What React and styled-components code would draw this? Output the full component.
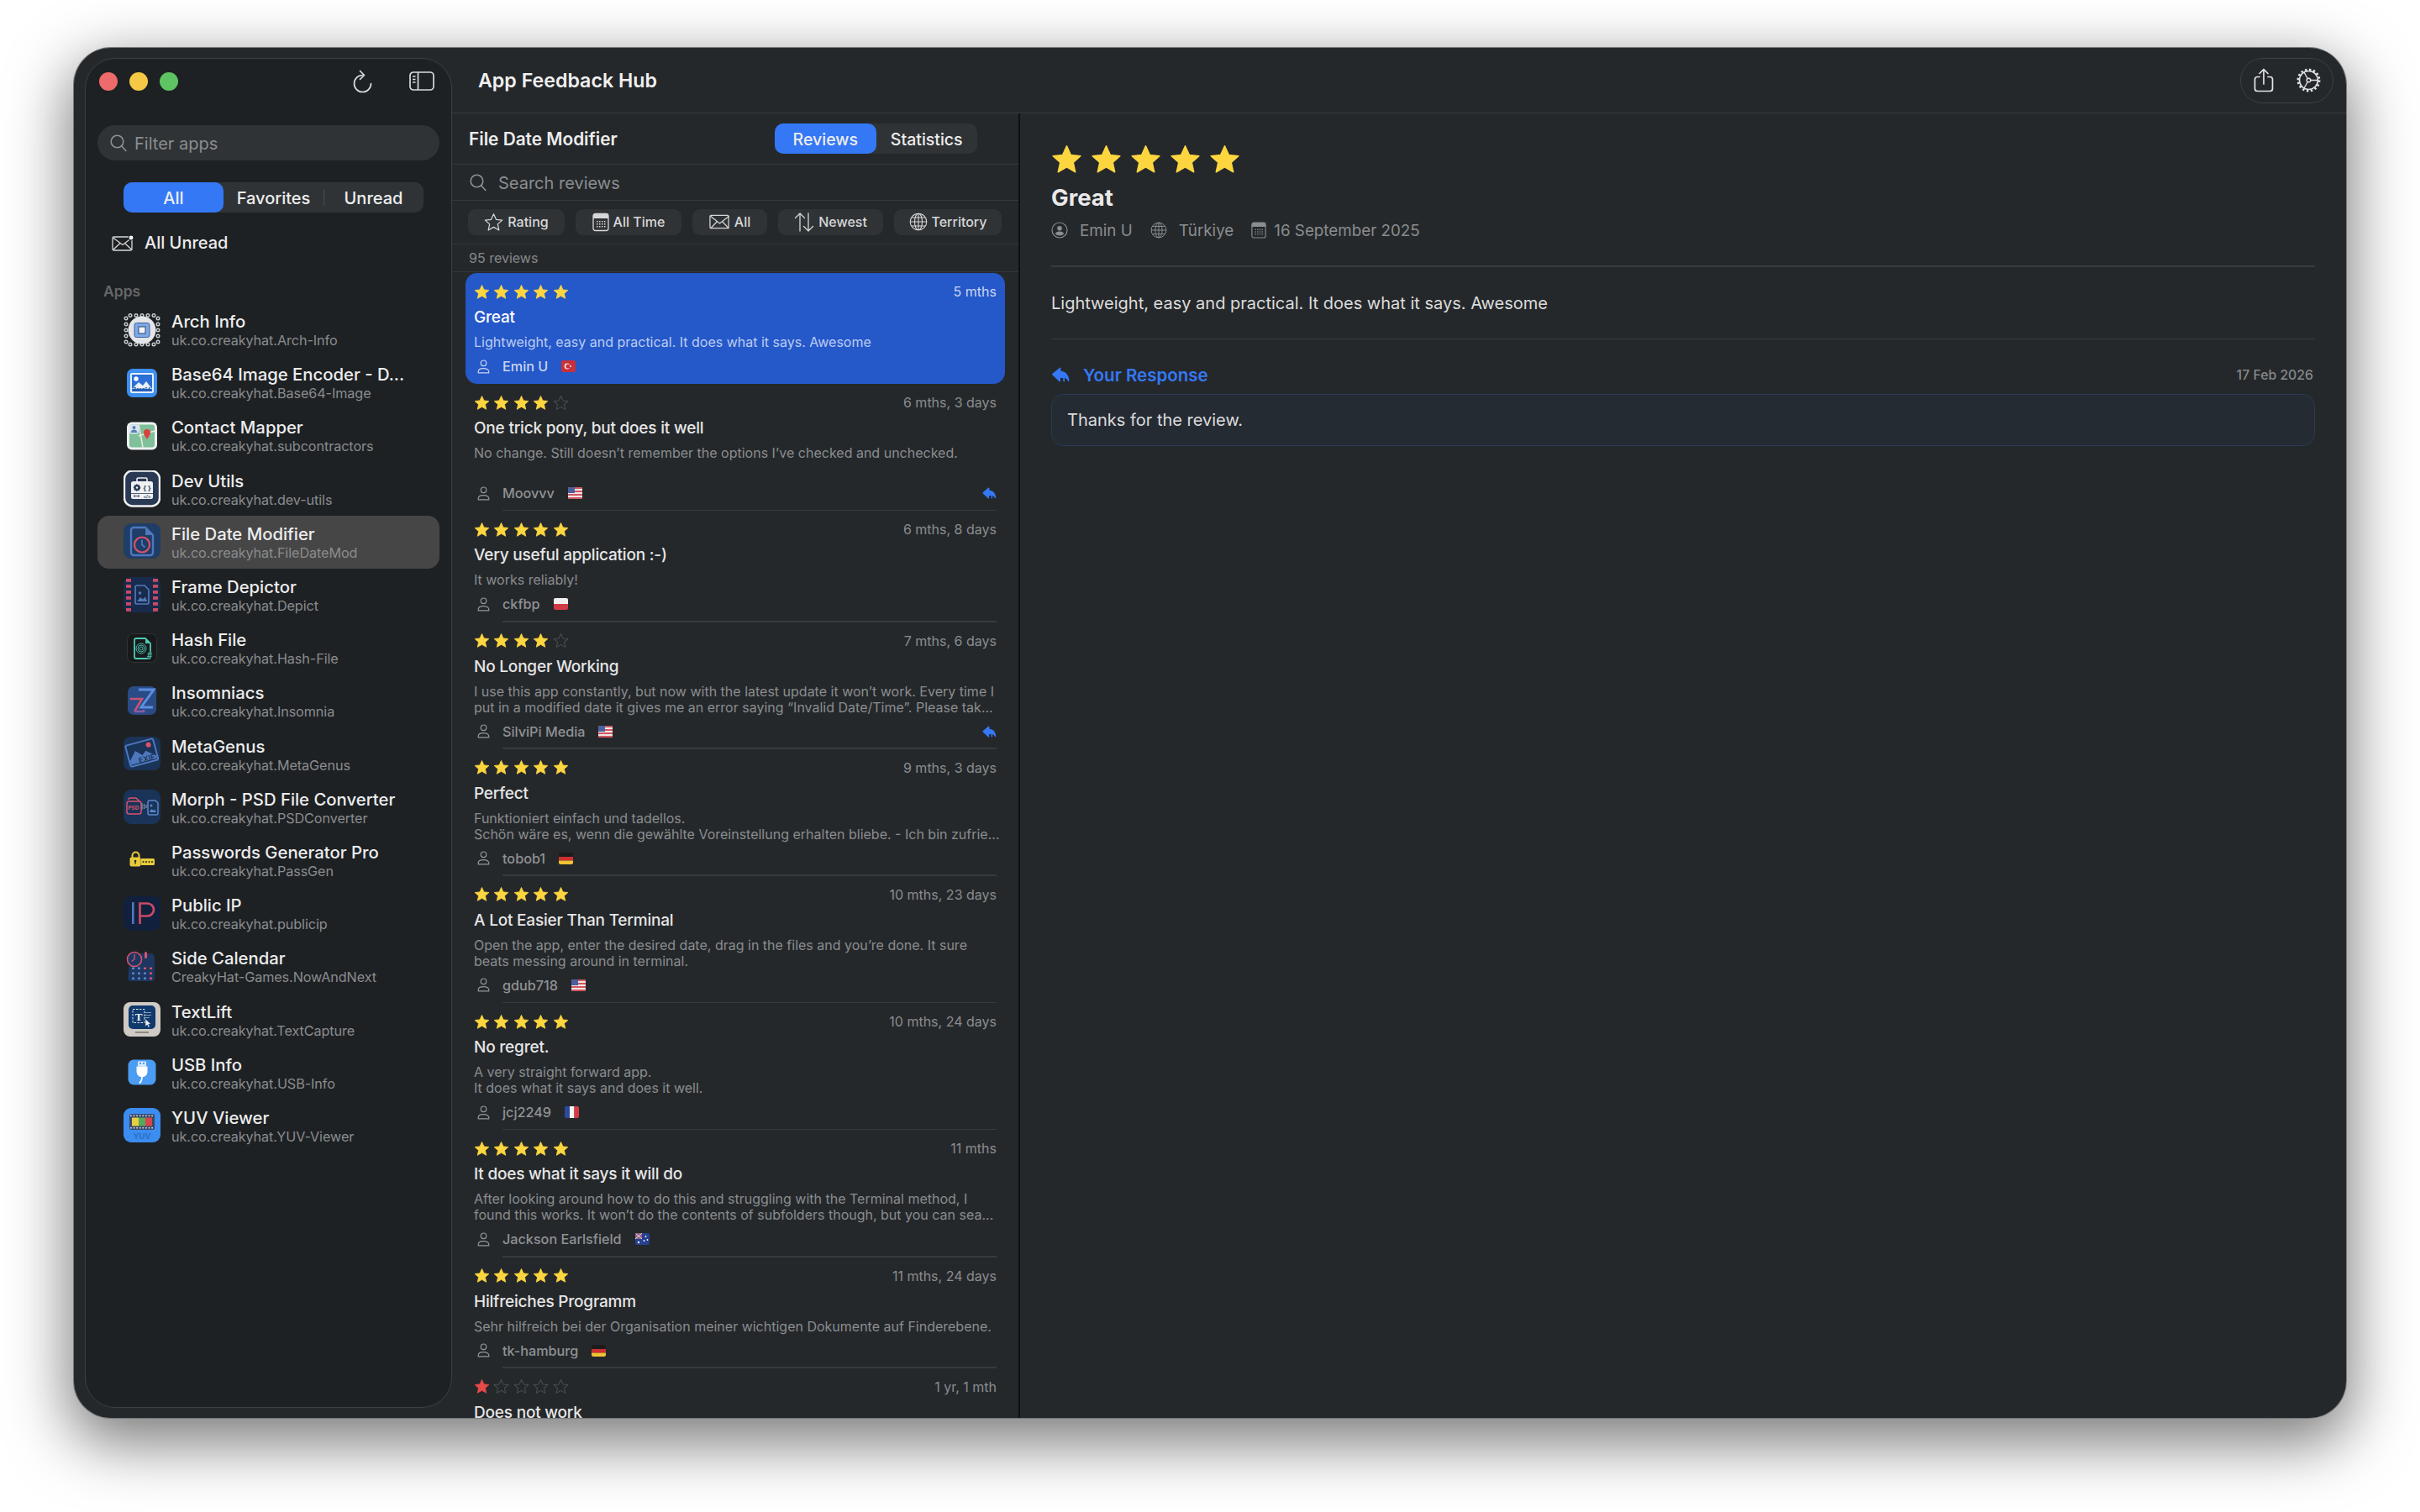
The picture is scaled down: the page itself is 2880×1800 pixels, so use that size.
import React from "react";
import styled, { createGlobalStyle } from "styled-components";

const BLUE = "#3478f6";
const FONT = `Inter, "Liberation Sans", sans-serif`;

const GlobalStyle = createGlobalStyle`
  html, body { margin: 0; padding: 0; background: #fff; }
  body { font-family: ${FONT}; -webkit-font-smoothing: antialiased; }
  * { box-sizing: border-box; }
  svg { display: block; flex: none; }
`;

const apps = [
  ["arch", "Arch Info", "uk.co.creakyhat.Arch-Info"],
  ["base64", "Base64 Image Encoder - D...", "uk.co.creakyhat.Base64-Image"],
  ["contact", "Contact Mapper", "uk.co.creakyhat.subcontractors"],
  ["dev", "Dev Utils", "uk.co.creakyhat.dev-utils"],
  ["filedate", "File Date Modifier", "uk.co.creakyhat.FileDateMod"],
  ["frame", "Frame Depictor", "uk.co.creakyhat.Depict"],
  ["hash", "Hash File", "uk.co.creakyhat.Hash-File"],
  ["insomnia", "Insomniacs", "uk.co.creakyhat.Insomnia"],
  ["meta", "MetaGenus", "uk.co.creakyhat.MetaGenus"],
  ["morph", "Morph - PSD File Converter", "uk.co.creakyhat.PSDConverter"],
  ["pass", "Passwords Generator Pro", "uk.co.creakyhat.PassGen"],
  ["ip", "Public IP", "uk.co.creakyhat.publicip"],
  ["calendar", "Side Calendar", "CreakyHat-Games.NowAndNext"],
  ["textlift", "TextLift", "uk.co.creakyhat.TextCapture"],
  ["usb", "USB Info", "uk.co.creakyhat.USB-Info"],
  ["yuv", "YUV Viewer", "uk.co.creakyhat.YUV-Viewer"],
];

const reviews = [
  { stars: 5, age: "5 mths", title: "Great", body: "Lightweight, easy and practical. It does what it says. Awesome", name: "Emin U", flag: "tr", selected: true },
  { stars: 4, age: "6 mths, 3 days", title: "One trick pony, but does it well", body: "No change. Still doesn’t remember the options I’ve checked and unchecked.", name: "Moovvv", flag: "us", replied: true },
  { stars: 5, age: "6 mths, 8 days", title: "Very useful application :-)", body: "It works reliably!", name: "ckfbp", flag: "pl" },
  { stars: 4, age: "7 mths, 6 days", title: "No Longer Working", body: "I use this app constantly, but now with the latest update it won’t work. Every time I\nput in a modified date it gives me an error saying “Invalid Date/Time”. Please tak...", name: "SilviPi Media", flag: "us", replied: true },
  { stars: 5, age: "9 mths, 3 days", title: "Perfect", body: "Funktioniert einfach und tadellos.\nSchön wäre es, wenn die gewählte Voreinstellung erhalten bliebe. - Ich bin zufrie...", name: "tobob1", flag: "de" },
  { stars: 5, age: "10 mths, 23 days", title: "A Lot Easier Than Terminal", body: "Open the app, enter the desired date, drag in the files and you’re done. It sure\nbeats messing around in terminal.", name: "gdub718", flag: "us" },
  { stars: 5, age: "10 mths, 24 days", title: "No regret.", body: "A very straight forward app.\nIt does what it says and does it well.", name: "jcj2249", flag: "fr" },
  { stars: 5, age: "11 mths", title: "It does what it says it will do", body: "After looking around how to do this and struggling with the Terminal method, I\nfound this works. It won’t do the contents of subfolders though, but you can sea...", name: "Jackson Earlsfield", flag: "au" },
  { stars: 5, age: "11 mths, 24 days", title: "Hilfreiches Programm", body: "Sehr hilfreich bei der Organisation meiner wichtigen Dokumente auf Finderebene.", name: "tk-hamburg", flag: "de" },
  { stars: 1, age: "1 yr, 1 mth", title: "Does not work", body: "", name: "", flag: "" },
];

/* ---------- small glyphs ---------- */

const StarIcon = ({ size, filled, color, outline = "#4b4e51" }) => (
  <svg width={size} height={size} viewBox="0 0 24 24">
    <path
      d="M12 1.8l3.1 6.9 7.5.8-5.6 5 1.6 7.4L12 18.1l-6.6 3.8L7 14.5l-5.6-5 7.5-.8z"
      fill={filled ? color : "none"}
      stroke={filled ? color : outline}
      strokeWidth={filled ? 1 : 1.3}
      strokeLinejoin="round"
    />
  </svg>
);

const ReplyIcon = ({ width, height }) => (
  <svg width={width} height={height} viewBox="0 0 24 20">
    <path
      d="M10.5.8c.6-.4 1.4 0 1.4.8v3.7c6.6.4 10.6 5 11.1 12.6.1 1-.9 1.4-1.5.6-1.5-2.3-2.9-3.7-4.5-4.3v4.2c0 .8-.8 1.2-1.4.8-.3-.2-.5-.4-.5-.7v-3.900c-1.200-.2-2.400-.2-3.700-.1v3.900c0 .8-.8 1.200-1.400.8L.7 10.400c-.5-.4-.5-1.100 0-1.500z"
      fill={BLUE}
    />
  </svg>
);

const SearchIcon = () => (
  <svg width="20" height="21" viewBox="0 0 20 21" fill="none" stroke="#8e9193" strokeWidth="1.6" strokeLinecap="round">
    <circle cx="8.5" cy="8.5" r="7.3" />
    <path d="M13.8 14l5 5.5" />
  </svg>
);

const RefreshIcon = () => (
  <svg width="24" height="28" viewBox="0 0 24 28" fill="none" stroke="#d9dadb" strokeWidth="1.7" strokeLinecap="round" strokeLinejoin="round">
    <path d="M12.5 6.500A10 10 0 1 0 22.500 16.500" />
    <path d="M9.500 1.500l5 5-5 5" />
  </svg>
);

const SidebarIcon = () => (
  <svg width="30" height="23" viewBox="0 0 30 23" fill="none" stroke="#d9dadb" strokeWidth="1.7">
    <rect x="1" y="1" width="28" height="21" rx="4" />
    <path d="M10.5 1v21" />
    <path d="M4 6h3.5M4 9.5h3.5M4 13h3.5" strokeWidth="1.5" />
  </svg>
);

const ShareIcon = () => (
  <svg width="24" height="29" viewBox="0 0 24 29" fill="none" stroke="#e3e4e5" strokeWidth="1.7" strokeLinecap="round" strokeLinejoin="round">
    <path d="M7 10.5H4.500a3 3 0 0 0-3 3v11a3 3 0 0 0 3 3h15a3 3 0 0 0 3-3v-11a3 3 0 0 0-3-3H17" />
    <path d="M12 19V1.500M7 6.500l5-5 5 5" />
  </svg>
);

const GearIcon = () => (
  <svg width="29" height="29" viewBox="0 0 29 29" fill="none" stroke="#e3e4e5">
    <circle cx="14.5" cy="14.5" r="11" strokeWidth="1.6" />
    <circle cx="14.5" cy="14.5" r="12.7" strokeWidth="2.5" strokeDasharray="2.4 2.6" />
    <circle cx="14.5" cy="14.5" r="2.3" strokeWidth="1.4" />
    <path d="M16.8 14.500h8.500M13.300 12.500L9 5M13.300 16.500L9 24" strokeWidth="1.4" />
  </svg>
);

const EnvelopeIcon = ({ dot, width = 26, height = 19, color = "#d6d7d8" }) => (
  <svg width={width} height={height} viewBox="0 0 26 19" fill="none" stroke={color} strokeWidth="1.3">
    <rect x="1" y={dot ? 2 : 1} width="23" height="16" rx="1.5" />
    <path d={dot ? "M1.5 3l11.500 8.500L24 3M1.500 17.500l8.500-8M24 17.500l-8.500-8" : "M1.500 2l11.500 9 11.500-9M1.500 17.500l8.500-9M24.500 17.500l-8.500-9"} />
    {dot && <circle cx="23" cy="3" r="3" fill="#f2f2f2" stroke="#1e2124" strokeWidth="1" />}
  </svg>
);

const GlobeIcon = ({ size, color }) => (
  <svg width={size} height={size} viewBox="0 0 22 22" fill="none" stroke={color} strokeWidth="1.1">
    <circle cx="11" cy="11" r="9.8" />
    <ellipse cx="11" cy="11" rx="4.5" ry="9.8" />
    <path d="M11 1.200v19.600M1.200 11h19.600M2.700 6h16.600M2.700 16h16.600" />
  </svg>
);

const CalendarIcon = ({ width, height, color }) => (
  <svg width={width} height={height} viewBox="0 0 20 22" fill="none">
    <rect x="1" y="1" width="18" height="20" rx="2.5" stroke={color} strokeWidth="1.3" />
    <path d="M1 4a3 3 0 0 1 3-3h12a3 3 0 0 1 3 3v2.500H1z" fill={color} />
    {[9.5, 12.5, 15.5].map((y) =>
      [5, 8, 11, 14].map((x) => <rect key={`${x}-${y}`} x={x} y={y} width="1.5" height="1.5" fill={color} />)
    )}
  </svg>
);

const PersonIcon = ({ color }) => (
  <svg width="15" height="17" viewBox="0 0 15 17" fill="none" stroke={color} strokeWidth="1.2">
    <circle cx="7.5" cy="4.3" r="3.3" />
    <path d="M1.200 15.800v-1.300c0-2.200 2.400-3.800 6.300-3.800s6.300 1.600 6.300 3.800v1.300z" strokeLinejoin="round" />
  </svg>
);

const PersonCircleIcon = ({ color }) => (
  <svg width="20" height="20" viewBox="0 0 20 20" fill="none" stroke={color} strokeWidth="1.2">
    <circle cx="10" cy="10" r="9" />
    <circle cx="10" cy="7.8" r="2.8" fill={color} stroke="none" />
    <path d="M4.800 14.500c.5-2 2.500-3 5.200-3s4.700 1 5.200 3c-1.300 1.300-3.100 2-5.200 2s-3.900-.7-5.200-2z" fill={color} stroke="none" />
  </svg>
);

const SortIcon = () => (
  <svg width="24" height="25" viewBox="0 0 24 25" fill="none" stroke="#d6d7d8" strokeWidth="1.3" strokeLinecap="round" strokeLinejoin="round">
    <path d="M7 23V2M1.500 7.500L7 2l5.500 5.500" />
    <path d="M17 2v21M11.500 17.500L17 23l5.500-5.500" />
  </svg>
);

const Flag = ({ code }) =>
  code ? (
    <FlagBox width="17" height="14" viewBox="0 0 17 14">
      {code === "tr" && (
        <>
          <rect width="17" height="14" fill="#c8303a" />
          <circle cx="7" cy="7" r="3.4" fill="#f4e5e5" />
          <circle cx="8" cy="7" r="2.6" fill="#c8303a" />
          <circle cx="11" cy="7" r="1" fill="#f4e5e5" />
        </>
      )}
      {code === "us" && (
        <>
          <rect width="17" height="14" fill="#eee5e5" />
          {[0, 4, 8, 12].map((y) => (
            <rect key={y} y={y} width="17" height="2" fill="#d2555f" />
          ))}
          <rect width="8" height="7" fill="#4c5f9e" />
        </>
      )}
      {code === "pl" && (
        <>
          <rect width="17" height="7" fill="#f2eeee" />
          <rect y="7" width="17" height="7" fill="#d23a46" />
        </>
      )}
      {code === "de" && (
        <>
          <rect width="17" height="5" fill="#1c1c1c" />
          <rect y="5" width="17" height="4.5" fill="#cf2f2f" />
          <rect y="9.5" width="17" height="4.5" fill="#f1c232" />
        </>
      )}
      {code === "fr" && (
        <>
          <rect width="6" height="14" fill="#2a4a9c" />
          <rect x="6" width="5.5" height="14" fill="#f4f4f4" />
          <rect x="11.5" width="5.5" height="14" fill="#d83a44" />
        </>
      )}
      {code === "au" && (
        <>
          <rect width="17" height="14" fill="#27408f" />
          <rect width="8" height="7" fill="#8f5f83" />
          <path d="M0 0l8 7M8 0L0 7" stroke="#e7dede" strokeWidth="1" />
          <circle cx="12.5" cy="4" r=".9" fill="#fff" />
          <circle cx="14.5" cy="8" r=".9" fill="#fff" />
          <circle cx="10.5" cy="9" r=".9" fill="#fff" />
          <circle cx="4" cy="11" r="1.2" fill="#fff" />
        </>
      )}
    </FlagBox>
  ) : null;

/* ---------- app icons, all drawn on a 44x44 canvas ---------- */

const drawings = {
  arch: (
    <>
      <g fill="none" stroke="#c9ccd1" strokeWidth="1.4">
        {[8, 15, 22, 29, 36].map((x) => (
          <React.Fragment key={x}>
            <circle cx={x} cy="4.5" r="1.8" />
            <circle cx={x} cy="39" r="1.8" />
            <circle cx="3" cy={x} r="1.8" />
            <circle cx="41" cy={x} r="1.8" />
          </React.Fragment>
        ))}
      </g>
      <circle cx="22" cy="22" r="16.5" fill="#e4e5e8" />
      <rect x="13" y="13.5" width="18" height="17" rx="2.5" fill="#7fa9e6" stroke="#3a5f9c" strokeWidth="1" />
      <rect x="18" y="18" width="8" height="8" fill="#f1f4f9" stroke="#26446f" strokeWidth="1" />
    </>
  ),
  base64: (
    <>
      <rect x="4" y="5" width="36" height="34" rx="7" fill="#3d8ff0" />
      <rect x="8" y="10" width="28" height="24" rx="2" fill="#e7eefb" />
      <rect x="10" y="12" width="24" height="20" fill="#2c6fd6" />
      <circle cx="15" cy="17" r="2.7" fill="#fff" />
      <path d="M10 29l8-8 5 4 4-5 7 9z" fill="#eaf1fb" />
      <text x="22" y="31.8" fontSize="5.6" fontWeight="700" textAnchor="middle" fill="#1f4f9f" fontFamily="Inter">Base64</text>
    </>
  ),
  contact: (
    <>
      <rect x="4" y="5.5" width="36" height="33" rx="6" fill="#eef0f0" />
      <rect x="7" y="8.5" width="30" height="27" rx="3" fill="#7fbf9a" />
      <path d="M18 8.500l5 27M18 22l19-6" stroke="#e9eee0" strokeWidth="1.5" fill="none" />
      <rect x="7" y="8.5" width="11" height="11" rx="2" fill="#d8e4f1" />
      <circle cx="12.5" cy="12" r="2" fill="#5b82b5" />
      <path d="M8.500 18c.5-2.500 2-3.500 4-3.500s3.500 1 4 3.500z" fill="#5b82b5" />
      <path d="M28 26c-2.500-4-4-5.500-4-8a4 4 0 0 1 8 0c0 2.500-1.500 4-4 8z" fill="#d8433f" />
    </>
  ),
  dev: (
    <>
      <rect x="1" y="0.5" width="42" height="42" rx="9.5" fill="#2a3a55" stroke="#f2f2f2" strokeWidth="2.4" />
      <path d="M16 13v-2.500c0-.8.7-1.500 1.500-1.500h9c.8 0 1.500.7 1.500 1.500V13" fill="none" stroke="#eee" strokeWidth="1.6" />
      <rect x="9" y="13" width="26" height="21" rx="2.5" fill="#f0f1f3" />
      <path d="M9 27.500h26" stroke="#2a3a55" strokeWidth=".8" />
      <circle cx="16" cy="20.5" r="3.5" fill="#2a3a55" stroke="#2a3a55" strokeWidth="1.4" strokeDasharray="1.5 1" />
      <circle cx="16" cy="20.5" r="1.2" fill="#f0f1f3" />
      <text x="28" y="23.5" fontSize="8" fontWeight="700" textAnchor="middle" fill="#2a3a55" fontFamily="Inter">{"{ }"}</text>
      <text x="28" y="33" fontSize="5" fontWeight="700" textAnchor="middle" fill="#2a3a55" fontFamily="Inter">{"</>"}</text>
      <path d="M12 30.500h7M12 30.500l1.500-1.300M12 30.500l1.500 1.300M19 30.500l-1.500-1.300M19 30.500l-1.500 1.300" stroke="#2a3a55" strokeWidth=".9" fill="none" />
    </>
  ),
  filedate: (
    <>
      <rect x="0" y="0" width="44" height="42" rx="9" fill="#1f3d66" />
      <path d="M9 8a3 3 0 0 1 3-3h14l9 9v21a3 3 0 0 1-3 3H12a3 3 0 0 1-3-3z" fill="none" stroke="#4e78bd" strokeWidth="2.4" />
      <path d="M26 5v9h9z" fill="#4e78bd" />
      <circle cx="22" cy="25.5" r="9" fill="#1f3d66" stroke="#d9526b" strokeWidth="2.2" />
      <path d="M22 19.500v6l3.500 3" fill="none" stroke="#4e78bd" strokeWidth="1.8" />
    </>
  ),
  frame: (
    <>
      <rect x="0" y="0" width="44" height="42" rx="8" fill="#182b4c" />
      {[2, 9, 16, 23, 30, 37].map((y) => (
        <React.Fragment key={y}>
          <rect x="3" y={y} width="6" height="3.8" fill="#c94a62" />
          <rect x="35" y={y} width="6" height="3.8" fill="#c94a62" />
        </React.Fragment>
      ))}
      <path d="M14 12a2 2 0 0 1 2-2h9l5 5v15a2 2 0 0 1-2 2H16a2 2 0 0 1-2-2z" fill="none" stroke="#5079b8" strokeWidth="1.7" />
      <circle cx="19.5" cy="19" r="1.8" fill="#5079b8" />
      <path d="M16 29l4-5 3 2.500 2.500-3 3 5.500z" fill="#5079b8" />
    </>
  ),
  hash: (
    <>
      <rect x="4.5" y="4.5" width="35" height="34" rx="7" fill="#17191b" stroke="#303436" strokeWidth="1" />
      <path d="M13 12a2 2 0 0 1 2-2h11l6 6v16a2 2 0 0 1-2 2H15a2 2 0 0 1-2-2z" fill="none" stroke="#4fc9b4" strokeWidth="1.8" />
      <path d="M26 10v6h6z" fill="#4fc9b4" />
      <g fill="none" stroke="#4fc9b4" strokeWidth=".9">
        <circle cx="21" cy="22" r="2" />
        <circle cx="21" cy="22" r="4" />
        <circle cx="21" cy="22" r="6" />
      </g>
      <text x="31" y="34" fontSize="10" fontWeight="800" textAnchor="middle" fill="#4fc9b4" stroke="#17191b" strokeWidth=".3" fontFamily="Inter">#</text>
    </>
  ),
  insomnia: (
    <>
      <rect x="5" y="4" width="34" height="34" rx="7" fill="#2a4b86" />
      <path d="M8 19h14l-9 15" fill="none" stroke="#c85273" strokeWidth="2.6" />
      <path d="M13 34h11v-2" fill="none" stroke="#8a5aa0" strokeWidth="2.6" />
      <path d="M18 8h18L21 29h14" fill="none" stroke="#5b8ee0" strokeWidth="3" />
    </>
  ),
  meta: (
    <>
      <rect x="0" y="1" width="44" height="40" rx="8" fill="#1a3358" />
      <g transform="rotate(-15 22 21)">
        <rect x="5" y="7" width="34" height="26" rx="2" fill="none" stroke="#4e78bd" strokeWidth="2" />
        <path d="M6 26l9-10 7 7 5-4 11 9v3H6z" fill="#4e78bd" />
        <circle cx="32" cy="13" r="3" fill="#d9526b" />
        <text x="26" y="31.5" fontSize="9" fontWeight="600" textAnchor="middle" fill="#1a3358" fontFamily="Inter">EXIF</text>
      </g>
    </>
  ),
  morph: (
    <>
      <rect x="0" y="1" width="44" height="41" rx="9" fill="#1a3358" />
      <rect x="4" y="15" width="17" height="15" rx="2.5" fill="#1a3358" stroke="#d9526b" strokeWidth="1.5" />
      <path d="M6 13a2 2 0 0 1 2-2h7l4 4" fill="none" stroke="#d9526b" strokeWidth="1.5" />
      <text x="12" y="25" fontSize="6.5" fontWeight="700" textAnchor="middle" fill="#d9526b" fontFamily="Inter">PSD</text>
      <path d="M22 17v8M24.500 18v6M27 19v4" stroke="#7e8ea8" strokeWidth="1.3" />
      <path d="M29 16a2 2 0 0 1 2-2h7l3 3v12a2 2 0 0 1-2 2h-8a2 2 0 0 1-2-2z" fill="none" stroke="#5a86cc" strokeWidth="1.5" />
      <circle cx="33" cy="20" r="1.5" fill="#5a86cc" />
      <path d="M30.500 28l3-4 2 2 1.500-1.500 2 3.500z" fill="#5a86cc" />
    </>
  ),
  pass: (
    <>
      <path d="M10.500 19v-2.500a4 4 0 0 1 8 0V19" fill="none" stroke="#e6cb3c" strokeWidth="2" />
      <rect x="7.5" y="18.5" width="13" height="11" rx="2" fill="#e6cb3c" />
      <circle cx="14" cy="23" r="1.3" fill="#2a2a1c" />
      <rect x="13.3" y="23" width="1.4" height="3.5" fill="#2a2a1c" />
      <rect x="20.5" y="20" width="16.5" height="8" rx="1.5" fill="#e6cb3c" />
      {[23.5, 27, 30.5, 34].map((x) => (
        <circle key={x} cx={x} cy="24" r="1" fill="#2a2a1c" />
      ))}
    </>
  ),
  ip: (
    <>
      <rect x="0" y="1" width="44" height="41" rx="9" fill="#11203c" />
      <rect x="10" y="8" width="2.6" height="26" fill="#4e78bd" />
      <path d="M19.500 34V9.500h9a7.500 7.500 0 0 1 0 15h-9" fill="none" stroke="#c94a62" strokeWidth="2.7" />
    </>
  ),
  calendar: (
    <>
      <path d="M8 10a4 4 0 0 1 4-4h20a5 5 0 0 1 5 5v24a4 4 0 0 1-4 4H9a4 4 0 0 1-4-4z" fill="#1d3761" />
      <rect x="25" y="4" width="3" height="8" rx="1.5" fill="#d9526b" />
      <circle cx="13" cy="13" r="8.5" fill="#1d3761" stroke="#d9526b" strokeWidth="1.6" />
      <path d="M13 7v6l-3.500 2.500" fill="none" stroke="#d9526b" strokeWidth="1.3" />
      {[24, 30, 36].map((y) =>
        [10, 17, 24, 31].map((x) => (
          <rect key={`${x}-${y}`} x={x} y={y - 1.5} width="3" height="2.5" rx=".5" fill={x === 31 || (x === 24 && y === 24) ? "#d9526b" : "#5a86cc"} />
        ))
      )}
    </>
  ),
  textlift: (
    <>
      <rect x="0" y="1" width="44" height="41" rx="8" fill="#cfcac4" />
      <rect x="6" y="5" width="32" height="28" rx="5" fill="#103a6e" />
      <rect x="11" y="9.5" width="14" height="16" fill="none" stroke="#dfe8f3" strokeWidth="1" strokeDasharray="2.5 1.5" />
      <text x="18" y="23" fontSize="13" fontWeight="700" textAnchor="middle" fill="#f2f2f2" fontFamily="Liberation Serif">T</text>
      <path d="M24 13.500h9M24 16.500h9M24 19.500h7" stroke="#8da6c4" strokeWidth=".9" />
      <path d="M26 21l0 9 2.200-2 1.500 3.200 1.500-.7-1.500-3.100 2.800-.3z" fill="#f2f2f2" stroke="#103a6e" strokeWidth=".5" />
      <rect x="14" y="36" width="16" height="2" fill="#8d8a86" />
    </>
  ),
  usb: (
    <>
      <rect x="5.5" y="6.5" width="33" height="30" rx="6.5" fill="#4b9cf2" />
      <rect x="17" y="8.5" width="10" height="6" rx=".8" fill="#d8e9fb" />
      <rect x="19" y="10" width="2" height="2" fill="#4b9cf2" />
      <rect x="23" y="10" width="2" height="2" fill="#4b9cf2" />
      <path d="M15.500 14.500h13v6c0 3.500-2.500 6-4.500 6.500h-4c-2-.5-4.500-3-4.500-6.500z" fill="#fff" />
      <path d="M22 27c0 3-.5 5-2.500 7" fill="none" stroke="#fff" strokeWidth="1.8" strokeLinecap="round" />
    </>
  ),
  yuv: (
    <>
      <rect x="0" y="1" width="44" height="41" rx="9" fill="#3b8df0" />
      <rect x="7" y="8" width="30" height="19" rx="2" fill="#3a4a6a" />
      <rect x="10" y="12.5" width="8" height="10" fill="#e8cf3f" />
      <rect x="18" y="12.5" width="8" height="10" fill="#56a85a" />
      <rect x="26" y="12.5" width="8" height="10" fill="#d8474a" />
      <path d="M8 10.200h28M8 24.800h28" stroke="#cfd7e5" strokeWidth="1.4" strokeDasharray="1.8 1.8" />
      <text x="22" y="37.5" fontSize="9.5" fontWeight="700" textAnchor="middle" fill="#2e6fc6" fontFamily="Inter">YUV</text>
    </>
  ),
};

const AppIcon = ({ kind }) => (
  <svg width="44" height="44" viewBox="0 0 44 44">
    {drawings[kind]}
  </svg>
);

const Stars = ({ count, size }) => (
  <StarRow $size={size}>
    {[1, 2, 3, 4, 5].map((i) => (
      <StarIcon key={i} size={size} filled={i <= count} color={count === 1 ? "#e84a4a" : "#fdd63f"} />
    ))}
  </StarRow>
);

/* ---------- page ---------- */

const App = () => (
  <Page>
    <GlobalStyle />
    <Window>
      <Sidebar>
        <SideToolbar>
          <Lights>
            <Light $color="#ee6a6b" />
            <Light $color="#f5c945" />
            <Light $color="#5ec463" />
          </Lights>
          <SideTools>
            <RefreshIcon />
            <SidebarIcon />
          </SideTools>
        </SideToolbar>

        <FilterField>
          <SearchIcon />
          <FilterText>Filter apps</FilterText>
        </FilterField>

        <SideSegment>
          <SideTab $active>All</SideTab>
          <SideTab>Favorites</SideTab>
          <SegDivider />
          <SideTab>Unread</SideTab>
        </SideSegment>

        <UnreadRow>
          <EnvelopeIcon dot />
          <UnreadLabel>All Unread</UnreadLabel>
        </UnreadRow>

        <SectionLabel>Apps</SectionLabel>

        <AppList>
          {apps.map(([kind, name, bundle]) => (
            <AppRow key={kind} $selected={kind === "filedate"}>
              <AppIcon kind={kind} />
              <AppText>
                <AppName>{name}</AppName>
                <AppBundle>{bundle}</AppBundle>
              </AppText>
            </AppRow>
          ))}
        </AppList>
      </Sidebar>

      <Main>
        <TopBar>
          <AppTitle>App Feedback Hub</AppTitle>
          <TopActions>
            <ShareIcon />
            <GearIcon />
          </TopActions>
        </TopBar>

        <Content>
          <ListPane>
            <ListHead>
              <ListTitle>File Date Modifier</ListTitle>
              <ViewSegment>
                <ViewTab $active>Reviews</ViewTab>
                <ViewTab>Statistics</ViewTab>
              </ViewSegment>
            </ListHead>

            <SearchRow>
              <SearchIcon />
              <SearchText>Search reviews</SearchText>
            </SearchRow>

            <ChipRow>
              <Chip $w={115}>
                <StarIcon size={23} outline="#d6d7d8" />
                Rating
              </Chip>
              <Chip $w={126}>
                <CalendarIcon width={20} height={23} color="#d6d7d8" />
                All Time
              </Chip>
              <Chip $w={89}>
                <EnvelopeIcon width={25} height={19} />
                All
              </Chip>
              <Chip $w={125}>
                <SortIcon />
                Newest
              </Chip>
              <Chip $w={128}>
                <GlobeIcon size={22} color="#d6d7d8" />
                Territory
              </Chip>
            </ChipRow>

            <CountRow>95 reviews</CountRow>

            <ReviewList>
              {reviews.map((r) => (
                <Review key={r.title} $selected={r.selected}>
                  <ReviewTop>
                    <Stars count={r.stars} size={19} />
                    <ReviewAge $selected={r.selected}>{r.age}</ReviewAge>
                  </ReviewTop>
                  <ReviewTitle $selected={r.selected}>{r.title}</ReviewTitle>
                  <ReviewBody $selected={r.selected} $reserve={r.replied}>
                    {r.body}
                  </ReviewBody>
                  <ReviewFooter>
                    <PersonSlot>
                      <PersonIcon color={r.selected ? "#c9d6f2" : "#95989a"} />
                    </PersonSlot>
                    <ReviewerName $selected={r.selected}>{r.name}</ReviewerName>
                    <Flag code={r.flag} />
                    {r.replied && (
                      <ReplySlot>
                        <ReplyIcon width={17} height={14} />
                      </ReplySlot>
                    )}
                  </ReviewFooter>
                  <ReviewRule $selected={r.selected} />
                </Review>
              ))}
            </ReviewList>
          </ListPane>

          <DetailPane>
            <DetailStars>
              <Stars count={5} size={37} />
            </DetailStars>
            <DetailTitle>Great</DetailTitle>
            <MetaRow>
              <MetaItem>
                <PersonCircleIcon color="#8a8d8f" />
                Emin U
              </MetaItem>
              <MetaItem>
                <GlobeIcon size={20} color="#8a8d8f" />
                Türkiye
              </MetaItem>
              <MetaItem $gap={9}>
                <CalendarIcon width={18} height={20} color="#8a8d8f" />
                16 September 2025
              </MetaItem>
            </MetaRow>
            <DetailRule />
            <DetailBody>Lightweight, easy and practical. It does what it says. Awesome</DetailBody>
            <DetailRule />
            <ResponseHead>
              <ReplyIcon width={23} height={18} />
              <ResponseLabel>Your Response</ResponseLabel>
              <ResponseDate>17 Feb 2026</ResponseDate>
            </ResponseHead>
            <ResponseBox>Thanks for the review.</ResponseBox>
          </DetailPane>
        </Content>
      </Main>
    </Window>
  </Page>
);

const Page = styled.div`
  width: 2880px;
  height: 1800px;
  padding: 57px 88px 112px;
  background: #fff;
  overflow: hidden;
`;

const Window = styled.div`
  width: 2704px;
  height: 1631px;
  display: flex;
  background: #25282b;
  border-radius: 44px;
  overflow: hidden;
  box-shadow: 0 0 0 1px #77797b, 0 24px 72px 6px rgba(0, 0, 0, 0.52);
`;

const Sidebar = styled.aside`
  width: 437px;
  margin: 12px 0 12px 13px;
  flex: none;
  padding: 0 14px;
  background: #1e2124;
  border: 1px solid #3b4046;
  border-radius: 36px;
  display: flex;
  flex-direction: column;
`;

const SideToolbar = styled.div`
  height: 53px;
  flex: none;
  padding: 0 6px 0 2px;
  display: flex;
  align-items: center;
  justify-content: space-between;
`;

const Lights = styled.div`
  display: flex;
  gap: 14px;
`;

const Light = styled.span`
  width: 22px;
  height: 22px;
  border-radius: 50%;
  background: ${(p) => p.$color};
`;

const SideTools = styled.div`
  display: flex;
  align-items: center;
  gap: 44px;
`;

const FilterField = styled.div`
  height: 42px;
  flex: none;
  margin-top: 26px;
  padding: 0 15px;
  display: flex;
  align-items: center;
  gap: 9px;
  background: #303336;
  border-radius: 21px;
`;

const FilterText = styled.span`
  padding-top: 1px;
  font-size: 20px;
  color: #8a8d8f;
`;

const SideSegment = styled.div`
  width: 357px;
  height: 36px;
  flex: none;
  margin: 26px 0 0 31px;
  display: flex;
  align-items: center;
  background: #303336;
  border-radius: 10px;
`;

const SideTab = styled.div`
  width: 119px;
  height: 36px;
  padding-top: 1px;
  display: flex;
  align-items: center;
  justify-content: center;
  font-size: 20px;
  font-weight: 500;
  color: #ededed;
  border-radius: 10px;
  background: ${(p) => (p.$active ? BLUE : "transparent")};
`;

const SegDivider = styled.span`
  width: 1px;
  height: 20px;
  margin: 0 -1px 0 0;
  background: #4a4d50;
`;

const UnreadRow = styled.div`
  height: 36px;
  flex: none;
  margin-top: 18px;
  padding-left: 17px;
  display: flex;
  align-items: center;
  gap: 13px;
`;

const UnreadLabel = styled.span`
  font-size: 20px;
  font-weight: 500;
  color: #ececec;
`;

const SectionLabel = styled.div`
  height: 24px;
  flex: none;
  margin: 28px 0 2px 7px;
  line-height: 24px;
  font-size: 17.5px;
  font-weight: 600;
  color: #646769;
`;

const AppList = styled.div`
  display: flex;
  flex-direction: column;
`;

const AppRow = styled.div`
  height: 63.2px;
  flex: none;
  padding-left: 31px;
  display: flex;
  align-items: center;
  gap: 13px;
  border-radius: 14px;
  background: ${(p) => (p.$selected ? "#464646" : "transparent")};
`;

const AppText = styled.div`
  padding-top: 1px;
  display: flex;
  flex-direction: column;
  min-width: 0;
`;

const AppName = styled.span`
  line-height: 24px;
  font-size: 20.3px;
  font-weight: 500;
  color: #ededed;
  white-space: nowrap;
`;

const AppBundle = styled.span`
  line-height: 20px;
  font-size: 16.2px;
  letter-spacing: -0.08px;
  color: #8a8c8e;
  white-space: nowrap;
`;

const Main = styled.main`
  flex: 1;
  min-width: 0;
  display: flex;
  flex-direction: column;
`;

const TopBar = styled.header`
  height: 78px;
  flex: none;
  padding: 0 15px 0 31px;
  display: flex;
  align-items: center;
  justify-content: space-between;
  border-bottom: 1.5px solid #393c3f;
`;

const AppTitle = styled.h1`
  margin: 0;
  font-size: 23.2px;
  font-weight: 600;
  color: #f0f0f0;
`;

const TopActions = styled.div`
  width: 111px;
  height: 54px;
  padding: 0 14px 0 15px;
  display: flex;
  align-items: center;
  justify-content: space-between;
  border: 1px solid #3b4144;
  border-radius: 27px;
`;

const Content = styled.div`
  flex: 1;
  min-height: 0;
  display: flex;
`;

const ListPane = styled.section`
  width: 676px;
  flex: none;
  display: flex;
  flex-direction: column;
  border-right: 2.5px solid #0f1012;
  overflow: hidden;
`;

const ListHead = styled.div`
  height: 61px;
  flex: none;
  padding: 1px 49px 0 20px;
  display: flex;
  align-items: center;
  justify-content: space-between;
  border-bottom: 1.5px solid #35383b;
`;

const ListTitle = styled.span`
  font-size: 20.8px;
  font-weight: 600;
  color: #ededed;
`;

const ViewSegment = styled.div`
  width: 241px;
  height: 36px;
  margin-top: -1px;
  padding-top: 0;
  display: flex;
  background: #303336;
  border-radius: 10px;
`;

const ViewTab = styled.div`
  flex: 1;
  padding-top: 1px;
  display: flex;
  align-items: center;
  justify-content: center;
  font-size: 19.5px;
  font-weight: 500;
  color: #ededed;
  border-radius: 10px;
  background: ${(p) => (p.$active ? BLUE : "transparent")};
`;

const SearchRow = styled.div`
  height: 43px;
  flex: none;
  padding: 0 0 0 21px;
  display: flex;
  align-items: center;
  gap: 14px;
  border-bottom: 1.5px solid #35383b;
`;

const SearchText = styled.span`
  padding-top: 1px;
  font-size: 20px;
  color: #8a8d8f;
`;

const ChipRow = styled.div`
  height: 52px;
  flex: none;
  padding: 0 0 1px 19px;
  display: flex;
  align-items: center;
  gap: 13px;
  border-bottom: 1.5px solid #35383b;
`;

const Chip = styled.div`
  width: ${(p) => p.$w}px;
  height: 31px;
  display: flex;
  align-items: center;
  justify-content: center;
  gap: 5px;
  font-size: 16px;
  font-weight: 500;
  color: #d6d7d8;
  background: #303336;
  border-radius: 9px;
`;

const CountRow = styled.div`
  height: 33px;
  flex: none;
  padding: 0 0 1px 20px;
  display: flex;
  align-items: center;
  font-size: 16px;
  color: #85888a;
  border-bottom: 1.5px solid #35383b;
`;

const ReviewList = styled.div`
  padding: 1px 16px 0;
  display: flex;
  flex-direction: column;
  flex: none;
`;

const Review = styled.article`
  flex: none;
  padding: 11px 10px 0;
  border-radius: 14px;
  background: ${(p) => (p.$selected ? "#2558c9" : "transparent")};
`;

const ReviewTop = styled.div`
  height: 22px;
  display: flex;
  align-items: center;
  justify-content: space-between;
`;

const StarRow = styled.div`
  display: flex;
  gap: ${(p) => (p.$size > 30 ? 10 : 4.4)}px;
`;

const ReviewAge = styled.span`
  font-size: 16px;
  color: ${(p) => (p.$selected ? "#c9d6f2" : "#8a8d8f")};
`;

const ReviewTitle = styled.div`
  height: 24px;
  margin-top: 8px;
  line-height: 24px;
  font-size: 19px;
  letter-spacing: -0.2px;
  font-weight: 500;
  color: ${(p) => (p.$selected ? "#fff" : "#e6e6e6")};
  white-space: nowrap;
`;

const ReviewBody = styled.div`
  min-height: ${(p) => (p.$reserve ? 38 : 19)}px;
  margin-top: 8px;
  line-height: 19px;
  font-size: 16px;
  color: ${(p) => (p.$selected ? "#bccdf1" : "#8a8d8f")};
  white-space: pre;
`;

const ReviewFooter = styled.div`
  height: 22px;
  margin-top: 8px;
  display: flex;
  align-items: center;
  font-size: 16.2px;
  font-weight: 500;
`;

const PersonSlot = styled.span`
  width: 34px;
  padding-left: 4px;
`;

const ReviewerName = styled.span`
  margin-right: 16px;
  color: ${(p) => (p.$selected ? "#c9d6f2" : "#8f9294")};
`;

const FlagBox = styled.svg`
  border-radius: 2px;
`;

const ReplySlot = styled.span`
  margin-left: auto;
`;

const ReviewRule = styled.div`
  height: 1.5px;
  margin: 8.7px 0 0 34px;
  background: ${(p) => (p.$selected ? "transparent" : "#383b3e")};
`;

const DetailPane = styled.section`
  flex: 1;
  min-width: 0;
  padding: 0 37px;
`;

const DetailStars = styled.div`
  margin-top: 36px;
`;

const DetailTitle = styled.h2`
  margin: 10px 0 0;
  line-height: 34px;
  font-size: 27.5px;
  font-weight: 700;
  color: #e9e9e9;
`;

const MetaRow = styled.div`
  margin-top: 9px;
  height: 26px;
  display: flex;
  align-items: center;
  gap: 21px;
`;

const MetaItem = styled.span`
  display: flex;
  align-items: center;
  gap: ${(p) => p.$gap || 14}px;
  font-size: 18.8px;
  color: #8a8d8f;
`;

const DetailRule = styled.div`
  height: 1.5px;
  margin-top: 29px;
  background: #393c3f;
`;

const DetailBody = styled.p`
  margin: 30px 0 0;
  line-height: 26px;
  font-size: 20px;
  color: #dcdcdc;
  & + div {
    margin-top: 29px;
  }
`;

const ResponseHead = styled.div`
  height: 28px;
  margin-top: 28px;
  display: flex;
  align-items: center;
  gap: 15px;
`;

const ResponseLabel = styled.span`
  font-size: 20.5px;
  font-weight: 600;
  color: ${BLUE};
`;

const ResponseDate = styled.span`
  margin-left: auto;
  margin-right: 2px;
  font-size: 15.8px;
  font-weight: 500;
  color: #85888a;
`;

const ResponseBox = styled.div`
  height: 62px;
  margin-top: 9px;
  padding: 0 18px;
  display: flex;
  align-items: center;
  font-size: 20px;
  color: #dcdcdc;
  background: #252b33;
  border: 1px solid #2a3a55;
  border-radius: 14px;
`;

export default App;
